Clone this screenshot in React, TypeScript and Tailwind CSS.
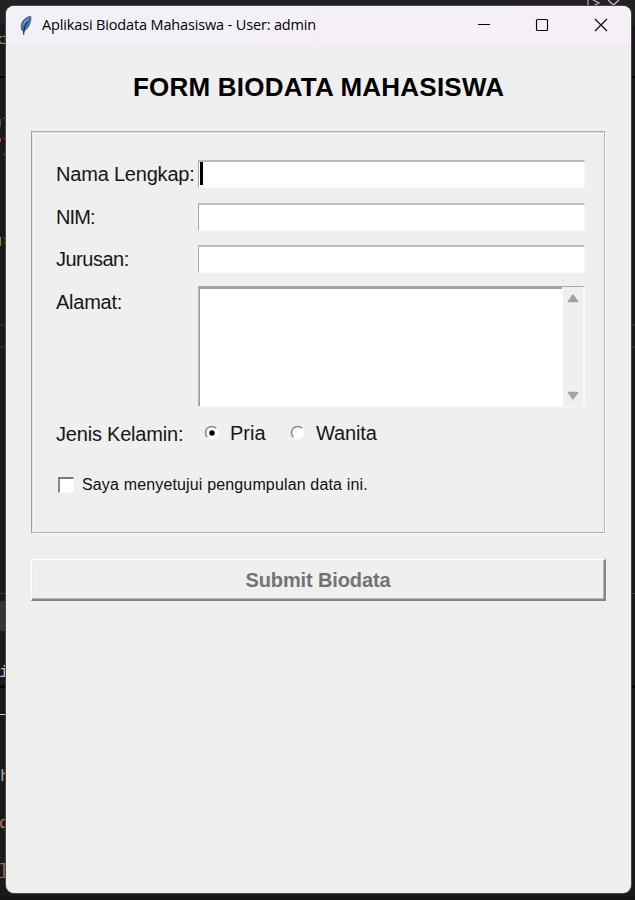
import type { ReactNode } from 'react';

const label = "whitespace-nowrap font-['Liberation_Sans',Arial,sans-serif] text-[20px] leading-[24px] text-[#161616]";

function Field({ name, top, spacing, focused = false }: { name: string; top: string; spacing: string; focused?: boolean }) {
  return (
    <div className={`flex ${top}`}>
      <div className={`w-[142px] pt-[2px] ${label} ${spacing}`}>{name}</div>
      <div className="h-[28px] w-[387px] border-t-2 border-r border-b border-l border-t-[#bcbcbc] border-r-[#f8f8f8] border-b-[#f8f8f8] border-l-[#a8a8a8] bg-white">
        {focused && <div className="ml-px h-[23px] w-[2.5px] bg-black" />}
      </div>
    </div>
  );
}

function Radio({ checked = false }: { checked?: boolean }) {
  return (
    <svg width="16" height="16" viewBox="0 0 16 16">
      <circle cx="8" cy="8" r="6.2" fill="#fff" />
      <path d="M3.3 12.2A6.2 6.2 0 0 1 12.2 3.3" fill="none" stroke="#8b8b8b" strokeWidth="1.6" />
      <path d="M12.8 4.2A6.2 6.2 0 0 1 4.2 12.8" fill="none" stroke="#fff" strokeWidth="1.2" />
      {checked && <circle cx="8" cy="8" r="2.7" fill="#000" />}
    </svg>
  );
}

function Code({ at, children }: { at: string; children: ReactNode }) {
  return <span className={`absolute whitespace-nowrap font-['Liberation_Mono',monospace] leading-[20px] ${at}`}>{children}</span>;
}

function Backdrop() {
  return (
    <div className="absolute inset-0 overflow-hidden bg-[#1a1a1a]">
      <div className="absolute inset-x-0 top-0 h-[25px] bg-[#222]" />
      <div className="absolute inset-x-0 top-[76px] h-[2px] bg-[#050505]" />
      <div className="absolute inset-x-0 top-[324px] h-[2px] bg-[#292929]" />
      <div className="absolute inset-x-0 top-[346px] h-[2px] bg-[#292929]" />
      <div className="absolute inset-x-0 top-[593px] h-px bg-[#3a3a3a]" />
      <div className="absolute top-[601px] left-0 h-[30px] w-[6px] bg-[#353535]" />
      <div className="absolute inset-x-0 top-[685px] h-[3px] bg-[#060606]" />
      <div className="absolute top-[714px] left-0 h-px w-[6px] bg-[#ccc]" />
      <div className="absolute inset-x-0 top-[896px] h-[4px] bg-[#151515]" />
      <Code at="top-[31px] left-[-6px] text-[15px] tracking-[-2px] text-[#a79b88]">ki</Code>
      <div className="absolute top-[119px] left-0 h-[8px] w-px bg-[#555]" />
      <div className="absolute top-[118px] left-[3px] h-px w-[3px] bg-[#555]" />
      <div className="absolute top-[115px] left-[5px] h-[11px] w-px bg-[#444]" />
      <div className="absolute top-[138px] left-0 h-[4px] w-px bg-[#c5431f]" />
      <div className="absolute top-[138px] left-[4px] h-px w-[2px] bg-[#719323]" />
      <div className="absolute top-[154px] left-[4px] h-px w-[2px] bg-[#719323]" />
      <div className="absolute top-[237px] left-0 h-[9px] w-px bg-[#659b3a]" />
      <Code at="top-[231px] left-[3px] text-[15px] text-[#568d3c]">s</Code>
      <Code at="top-[663px] left-[-1px] text-[17px] text-[#b5c5c9]">i</Code>
      <Code at="top-[767px] left-0 text-[17px] text-[#a5a5a5]">h</Code>
      <Code at="top-[814px] left-[-1px] text-[17px] text-[#b57964]">d</Code>
      <Code at="top-[861px] left-[-2px] text-[17px] text-[#a96c5b]">]</Code>
      <div className="absolute top-0 left-[587px] h-[6px] w-px bg-[#5d87b8]" />
      <div className="absolute top-0 left-[588px] h-[6px] w-px bg-[#9b6a36]" />
      <svg className="absolute top-0 left-[590px]" width="32" height="6" viewBox="0 0 32 6" fill="none" stroke="#bcbcbc" strokeWidth="1.3">
        <path d="M3 0L9 3L3 6M18 0L23.5 5L29 0" />
      </svg>
    </div>
  );
}

function Feather() {
  return (
    <svg width="14" height="21" viewBox="0 0 14 21">
      <path d="M4.2 16.5C2.3 15 1.7 12 2.6 8.7C3.8 5 7 2.2 11.5 1.3C12.8 4.5 10.6 10.8 8.1 13.4L5.3 16.2Z" fill="#3e6fa3" stroke="#555a62" strokeWidth="0.9" />
      <path d="M3.6 11.5C3.8 7.8 6.7 4 10 2.7L6.3 8.5Z" fill="#6da3dc" />
      <path d="M6.4 13.2L10.8 4.2L8.8 10.8Z" fill="#4186d4" />
      <path d="M8 7Q5 11.5 4.6 19.7" fill="none" stroke="#20252d" strokeWidth="1.2" />
    </svg>
  );
}

export default function App() {
  return (
    <div className="relative h-[900px] w-[635px] overflow-hidden p-[6px]">
      <Backdrop />
      <main className="relative flex h-[887px] w-[625px] flex-col overflow-hidden rounded-[8px] bg-[#efefef] shadow-[0_0_0_1px_#484848]">
        <header className="flex h-[38px] shrink-0 items-center bg-linear-to-r from-[#f3f0f8] to-[#f6eff7] pl-[13px]">
          <Feather />
          <h1 className="ml-[9px] w-[427px] whitespace-nowrap font-['Open_Sans',sans-serif] text-[14.5px] leading-[20px] tracking-[-0.15px] text-black">Aplikasi Biodata Mahasiswa - User: admin</h1>
          <svg width="142" height="14" viewBox="0 0 142 14" fill="none" stroke="#000" strokeWidth="1.15">
            <path d="M9 6.5H21" />
            <rect x="67.5" y="1.5" width="11" height="11" rx="1" />
            <path d="M126 1L138 13M138 1L126 13" />
          </svg>
        </header>
        <div className="flex flex-col pl-[25px]">
          <h2 className="mt-[28px] ml-[102px] h-[30px] whitespace-nowrap font-['Liberation_Sans',Arial,sans-serif] text-[26px] leading-[30px] font-bold tracking-[0.22px] text-black">FORM BIODATA MAHASISWA</h2>
          <section className="mt-[29px] h-[403px] w-[575px] border border-t-[#b0b0b0] border-r-white border-b-white border-l-[#a0a0a0]">
            <div className="h-full border border-t-[#d8d8d8] border-r-[#b5b5b5] border-b-[#aaa] border-l-[#e5e5e5]">
              <div className="h-full border-t border-l border-t-white border-l-[#f8f8f8] pl-[22px]">
                <Field name="Nama Lengkap:" top="mt-[26px]" spacing="tracking-[-0.2px]" focused />
                <Field name="NIM:" top="mt-[15px]" spacing="tracking-[-0.9px]" />
                <Field name="Jurusan:" top="mt-[14px]" spacing="tracking-[-0.5px]" />
                <div className="mt-[13px] flex">
                  <div className={`w-[142px] pt-[4px] tracking-[-0.25px] ${label}`}>Alamat:</div>
                  <div className="flex h-[121px] w-[387px] border border-r-2 border-t-[#aaa] border-r-[#fafafa] border-b-[#f8f8f8] border-l-[#b4b4b4] bg-white">
                    <div className="w-[363px] border-t-2 border-l border-[#a0a0a0]" />
                    <div className="ml-px flex w-[20px] flex-col items-center justify-between bg-[#efefef] pt-[7px] pb-[6px]">
                      <svg width="12" height="9" viewBox="0 0 12 9"><path d="M6 1.2L10.5 7.5H1.5Z" fill="#a3a3a3" stroke="#a3a3a3" strokeWidth="1.6" strokeLinejoin="round" /></svg>
                      <svg width="12" height="9" viewBox="0 0 12 9"><path d="M6 7.8L1.5 1.5H10.5Z" fill="#a3a3a3" stroke="#a3a3a3" strokeWidth="1.6" strokeLinejoin="round" /></svg>
                    </div>
                  </div>
                </div>
                <div className="mt-[14px] flex h-[25px]">
                  <div className={`w-[148px] pt-px tracking-[-0.2px] ${label}`}>Jenis Kelamin:</div>
                  <div className="pt-[4px]"><Radio checked /></div>
                  <div className={`ml-[10px] w-[60px] ${label}`}>Pria</div>
                  <div className="pt-[4px]"><Radio /></div>
                  <div className={`ml-[10px] tracking-[-0.15px] ${label}`}>Wanita</div>
                </div>
                <div className="mt-[29px] flex h-[20px] items-center">
                  <div className="ml-[2px] h-[16px] w-[16px] border-t-2 border-r border-b border-l-2 border-t-[#777] border-r-[#f7f7f7] border-b-[#f7f7f7] border-l-[#888] bg-white" />
                  <span className="ml-[8px] whitespace-nowrap font-['Liberation_Sans',Arial,sans-serif] text-[16px] leading-[20px] tracking-[0.15px] text-[#111]">Saya menyetujui pengumpulan data ini.</span>
                </div>
              </div>
            </div>
          </section>
          <button className="mt-[25px] h-[42px] w-[575px] border-t border-r-2 border-b-2 border-l border-t-white border-r-[#858585] border-b-[#858585] border-l-white bg-[#efefef] font-['Liberation_Sans',Arial,sans-serif] text-[20px] leading-[24px] font-bold tracking-[-0.12px] text-[#737373]">
            <span className="flex h-full items-center justify-center border border-t-[#e9e9e9] border-r-[#b5b5b5] border-b-[#bababa] border-l-[#e9e9e9]">Submit Biodata</span>
          </button>
        </div>
      </main>
    </div>
  );
}
